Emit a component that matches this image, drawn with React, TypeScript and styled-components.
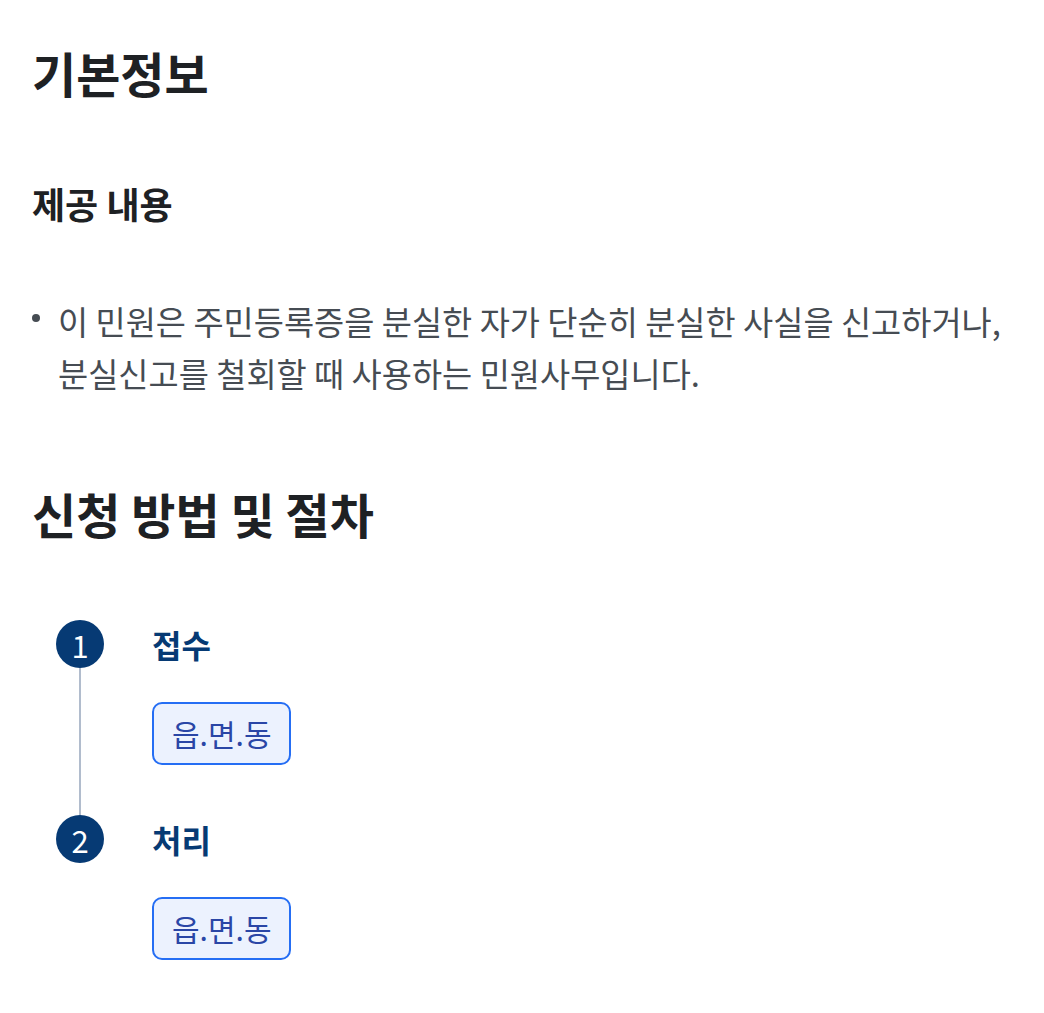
import React from "react";
import styled, { createGlobalStyle } from "styled-components";

const GlobalStyle = createGlobalStyle`
  html, body {
    margin: 0;
    padding: 0;
    background: #ffffff;
  }
  body {
    font-family: "Noto Sans CJK KR", "Noto Sans", sans-serif;
    color: #1e2124;
  }
`;

const Page = styled.main`
  padding: 42px 32px 40px 32px;
  display: flex;
  flex-direction: column;
`;

const PageTitle = styled.h1`
  margin: 0;
  font-size: 48px;
  line-height: 60px;
  font-weight: 700;
  color: #1e2124;
`;

const SubTitle = styled.h3`
  margin: 77px 0 0 0;
  font-size: 36px;
  line-height: 48px;
  font-weight: 700;
  color: #1e2124;
`;

const BulletList = styled.ul`
  margin: 68px 0 0 0;
  padding: 0;
  list-style: none;
`;

const BulletItem = styled.li`
  position: relative;
  padding-left: 26px;
  font-size: 32.8px;
  line-height: 52px;
  color: #464c53;
  &::before {
    content: "";
    position: absolute;
    left: 0;
    top: 19px;
    width: 8px;
    height: 8px;
    border-radius: 50%;
    background: #464c53;
  }
`;

const SectionTitle = styled.h2`
  margin: 84px 0 0 0;
  font-size: 48px;
  line-height: 60px;
  font-weight: 700;
  color: #1e2124;
`;

const StepList = styled.ol`
  margin: 77px 0 0 0;
  padding: 0 0 0 24px;
  list-style: none;
`;

const StepItem = styled.li`
  display: flex;
  gap: 48px;
`;

const Marker = styled.div`
  display: flex;
  flex-direction: column;
  align-items: center;
  width: 48px;
  flex-shrink: 0;
`;

const Circle = styled.span`
  width: 48px;
  height: 48px;
  border-radius: 50%;
  background: #063a74;
  color: #ffffff;
  display: flex;
  align-items: center;
  justify-content: center;
  font-size: 31px;
  line-height: 1;
  font-weight: 400;
`;

const Line = styled.span`
  flex: 1;
  width: 2px;
  background: #b1bccd;
`;

const StepBody = styled.div<{ $last?: boolean }>`
  display: flex;
  flex-direction: column;
  align-items: flex-start;
  padding-bottom: ${(p) => (p.$last ? "0" : "50px")};
`;

const StepTitle = styled.h4`
  margin: 0;
  font-size: 32px;
  line-height: 48px;
  font-weight: 700;
  color: #063a74;
`;

const Badge = styled.span`
  margin-top: 34px;
  display: inline-block;
  padding: 7px 18px;
  border: 2px solid #256ef4;
  border-radius: 10px;
  background: #ecf2fe;
  color: #2a46a6;
  font-size: 30px;
  line-height: 45px;
`;

const steps = [
  { n: 1, title: "접수", place: "읍.면.동" },
  { n: 2, title: "처리", place: "읍.면.동" },
];

export default function App() {
  return (
    <>
      <GlobalStyle />
      <Page>
        <PageTitle>기본정보</PageTitle>
        <SubTitle>제공 내용</SubTitle>
        <BulletList>
          <BulletItem>
            이 민원은 주민등록증을 분실한 자가 단순히 분실한 사실을 신고하거나,
            분실신고를 철회할 때 사용하는 민원사무입니다.
          </BulletItem>
        </BulletList>
        <SectionTitle>신청 방법 및 절차</SectionTitle>
        <StepList>
          {steps.map((s, i) => {
            const last = i === steps.length - 1;
            return (
              <StepItem key={s.n}>
                <Marker>
                  <Circle>{s.n}</Circle>
                  {!last && <Line />}
                </Marker>
                <StepBody $last={last}>
                  <StepTitle>{s.title}</StepTitle>
                  <Badge>{s.place}</Badge>
                </StepBody>
              </StepItem>
            );
          })}
        </StepList>
      </Page>
    </>
  );
}
